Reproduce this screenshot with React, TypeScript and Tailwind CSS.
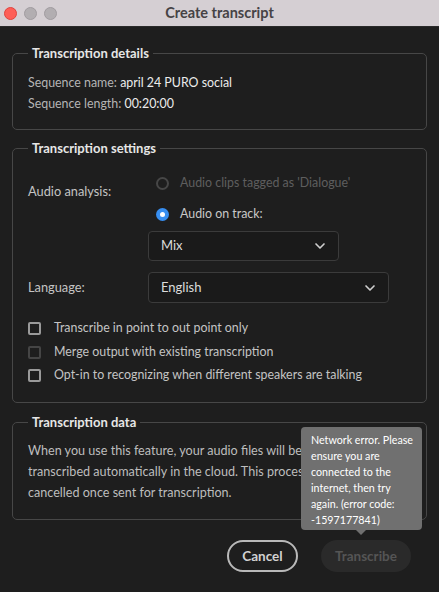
import { ChevronDown } from "lucide-react";

const font = { fontFamily: "Lato, 'Noto Sans', sans-serif" };

function Section({ title, children, className = "" }: { title: string; children: React.ReactNode; className?: string }) {
  return (
    <fieldset className={`border border-[#474747] rounded-[5px] px-[15px] ${className}`}>
      <legend className="px-[4px] text-[13px] leading-[18px] font-bold text-[#e6e6e6]">{title}</legend>
      {children}
    </fieldset>
  );
}

function Dropdown({ value, width }: { value: string; width: string }) {
  return (
    <div className={`${width} flex items-center justify-between border border-[#3b3b3b] rounded-[4px] bg-[#1a1a1a] pl-[12px] pr-[10px] text-[13px] text-[#dcdcdc]`}>
      <span>{value}</span>
      <ChevronDown size={16} strokeWidth={2.5} className="text-[#cfcfcf]" />
    </div>
  );
}

function Check({ label, dim }: { label: string; dim?: boolean }) {
  return (
    <div className="flex items-center h-[20px] gap-[13px]">
      <span className={`w-[13px] h-[13px] rounded-[2px] border-2 ${dim ? "border-[#454545]" : "border-[#9a9a9a]"}`} />
      <span className="text-[12.4px] text-[#c4c4c4]">{label}</span>
    </div>
  );
}

export default function App() {
  return (
    <div className="relative w-[439px] h-[592px] overflow-hidden bg-[#1e1e1e]" style={font}>
      {/* window title bar */}
      <div className="relative h-[27px] bg-[#d5cfd3] border-b border-[#2a2a2a] flex items-center justify-center">
        <div className="absolute left-[4px] top-[7px] flex gap-[7px]">
          <span className="w-[13px] h-[13px] rounded-full bg-[#fe5f57] border border-[#e0443e]" />
          <span className="w-[13px] h-[13px] rounded-full bg-[#b2aeb1] border border-[#a19ca0]" />
          <span className="w-[13px] h-[13px] rounded-full bg-[#b2aeb1] border border-[#a19ca0]" />
        </div>
        <span className="text-[14.5px] font-bold text-[#464345]">Create transcript</span>
      </div>

      <div className="px-[12px]">
        <Section title="Transcription details" className="mt-[17px] pt-[10px] pb-[15px]">
          <div className="text-[12.4px] leading-[21px]">
            <div>
              <span className="text-[#b5b5b5]">Sequence name: </span>
              <span className="text-[#ececec]">april 24 PURO social</span>
            </div>
            <div>
              <span className="text-[#b5b5b5]">Sequence length: </span>
              <span className="text-[#ececec]">00:20:00</span>
            </div>
          </div>
        </Section>

        <Section title="Transcription settings" className="mt-[9px] pt-[15px] pb-[17px]">
          <div className="flex">
            <div className="w-[120px] mt-[9px] text-[12.8px] leading-[20px] text-[#c4c4c4]">Audio analysis:</div>
            <div className="flex flex-col">
              <div className="flex items-center h-[22px] pl-[8px] gap-[11px]">
                <span className="w-[13px] h-[13px] rounded-full border-2 border-[#474747]" />
                <span className="text-[12.4px] text-[#5e5e5e]">Audio clips tagged as 'Dialogue'</span>
              </div>
              <div className="flex items-center h-[22px] pl-[8px] gap-[11px] mt-[9px]">
                <span className="w-[13px] h-[13px] rounded-full bg-[#378ef0] flex items-center justify-center">
                  <span className="w-[5px] h-[5px] rounded-full bg-white" />
                </span>
                <span className="text-[12.4px] text-[#c8c8c8]">Audio on track:</span>
              </div>
              <div className="mt-[6px] h-[30px] flex">
                <Dropdown value="Mix" width="w-[191px]" />
              </div>
            </div>
          </div>

          <div className="flex items-center mt-[11px] h-[31px]">
            <div className="w-[120px] text-[12.8px] text-[#c4c4c4]">Language:</div>
            <div className="h-[31px] flex">
              <Dropdown value="English" width="w-[241px]" />
            </div>
          </div>

          <div className="mt-[15px] flex flex-col">
            <Check label="Transcribe in point to out point only" />
            <div className="mt-[4px]">
              <Check label="Merge output with existing transcription" dim />
            </div>
            <div className="mt-[3px]">
              <Check label="Opt-in to recognizing when different speakers are talking" />
            </div>
          </div>
        </Section>

        <Section title="Transcription data" className="mt-[10px] pt-[9px] pb-[16px]">
          <p className="text-[12.6px] leading-[21px] text-[#bdbdbd] whitespace-nowrap">
            When you use this feature, your audio files will be
            <br />
            transcribed automatically in the cloud. This process cannot be
            <br />
            cancelled once sent for transcription.
          </p>
        </Section>

        <div className="mt-[20px] mr-[16px] flex justify-end gap-[23px]">
          <button className="w-[71px] h-[32px] rounded-full border-2 border-[#b9b9b9] text-[13.5px] font-bold text-[#d2d2d2]">
            Cancel
          </button>
          <button className="w-[90px] h-[32px] rounded-full bg-[#2a2a2a] text-[13.5px] font-bold text-[#555555]">
            Transcribe
          </button>
        </div>
      </div>

      {/* error tooltip over the Transcribe button */}
      <div className="absolute left-[301px] top-[427px] w-[121px] h-[103px] rounded-[4px] bg-[#707070] pl-[10px] pt-[5px]">
        <p className="text-[10.7px] leading-[16px] text-white whitespace-nowrap">
          Network error. Please
          <br />
          ensure you are
          <br />
          connected to the
          <br />
          internet, then try
          <br />
          again. (error code:
          <br />
          -1597177841)
        </p>
        <span className="absolute left-[55px] -bottom-[5px] w-0 h-0 border-l-[5px] border-r-[5px] border-t-[5px] border-l-transparent border-r-transparent border-t-[#707070]" />
      </div>
    </div>
  );
}
